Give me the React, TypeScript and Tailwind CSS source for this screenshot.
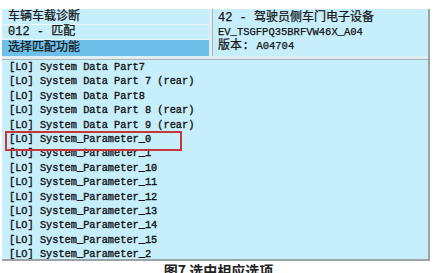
import React from 'react'

const mono = { fontFamily: '"Liberation Mono", "Noto Sans CJK SC", monospace' }

const items = [
  '[LO] System Data Part7',
  '[LO] System Data Part 7 (rear)',
  '[LO] System Data Part8',
  '[LO] System Data Part 8 (rear)',
  '[LO] System Data Part 9 (rear)',
  '[LO] System_Parameter_0',
  '[LO] System_Parameter_1',
  '[LO] System_Parameter_10',
  '[LO] System_Parameter_11',
  '[LO] System_Parameter_12',
  '[LO] System_Parameter_13',
  '[LO] System_Parameter_14',
  '[LO] System_Parameter_15',
  '[LO] System_Parameter_2',
]

export default function App() {
  return (
    <div className="w-[437px] h-[273px] overflow-hidden bg-white pt-[9px] pl-[2px]">
      <div className="w-[428px] border-r-2 border-b-2 border-[#9aa4a8] bg-[#dfeef3]">
        {/* header */}
        <div
          className="flex h-[47px] gap-[3px] text-[12px] leading-[14px] text-[#161616] [-webkit-text-stroke:0.25px_#161616]"
          style={mono}
        >
          <div className="flex w-[207px] flex-col gap-px bg-[#eaf6fa]">
            <div className="flex h-[15px] items-center bg-[#c6eefb] pl-[6px]">车辆车载诊断</div>
            <div className="flex h-[14px] items-center bg-[#c6eefb] pl-[6px]">012 - 匹配</div>
            <div className="flex h-[16px] items-center bg-[#6ec0eb] pl-[6px]">选择匹配功能</div>
          </div>
          <div className="flex flex-1 flex-col justify-center border-l border-[#a9b6ba] bg-[#c6eefb] pl-[5px] pb-px">
            <div>42 - 驾驶员侧车门电子设备</div>
            <div className="text-[10.5px]">EV_TSGFPQ35BRFVW46X_A04</div>
            <div>
              版本: <span className="text-[10.5px]">A04704</span>
            </div>
          </div>
        </div>

        {/* list */}
        <div className="relative mt-[3px] h-[200px] overflow-hidden border-t border-[#aab4b8] bg-[#c6eefb] pl-[7px]">
          {items.map((t) => (
            <div
              key={t}
              className="h-[14.4px] whitespace-pre text-[10.3px] leading-[14.4px] text-[#141414] [-webkit-text-stroke:0.35px_#141414]"
              style={mono}
            >
              {t}
            </div>
          ))}
          <div className="absolute left-[3px] top-[71px] h-[20px] w-[177px] border-2 border-[#c8363c]" />
        </div>
      </div>

      <div
        className="mt-[2px] pr-[2px] text-center text-[14px] font-bold leading-[14px] text-[#222]"
        style={{ fontFamily: '"Noto Sans CJK SC", sans-serif' }}
      >
        图7 选中相应选项
      </div>
    </div>
  )
}
